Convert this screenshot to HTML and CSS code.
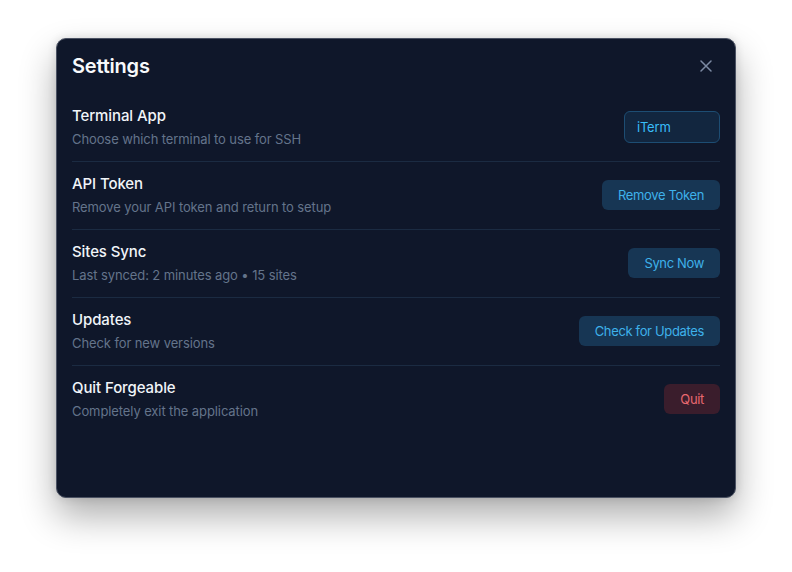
FILE: index.html
```html
<!DOCTYPE html>
<html>
<head>
<meta charset="utf-8">
<link rel="stylesheet" href="styles.css">
</head>
<body>
<div class="dialog">
  <div class="header">
    <h1 class="title">Settings</h1>
    <button class="close" aria-label="Close">
      <svg width="12" height="12" viewBox="0 0 12 12"><path d="M1 1 L11 11 M11 1 L1 11" stroke="#7c8aa3" stroke-width="1.5" stroke-linecap="round"/></svg>
    </button>
  </div>
  <div class="rows">
    <div class="row">
      <div class="info">
        <div class="label">Terminal App</div>
        <div class="desc">Choose which terminal to use for SSH</div>
      </div>
      <div class="select">iTerm</div>
    </div>
    <div class="row">
      <div class="info">
        <div class="label">API Token</div>
        <div class="desc">Remove your API token and return to setup</div>
      </div>
      <button class="btn">Remove Token</button>
    </div>
    <div class="row">
      <div class="info">
        <div class="label">Sites Sync</div>
        <div class="desc">Last synced: 2 minutes ago • 15 sites</div>
      </div>
      <button class="btn">Sync Now</button>
    </div>
    <div class="row">
      <div class="info">
        <div class="label">Updates</div>
        <div class="desc">Check for new versions</div>
      </div>
      <button class="btn">Check for Updates</button>
    </div>
    <div class="row last">
      <div class="info">
        <div class="label">Quit Forgeable</div>
        <div class="desc">Completely exit the application</div>
      </div>
      <button class="btn danger">Quit</button>
    </div>
  </div>
</div>
</body>
</html>
```
FILE: styles.css
```css
html, body {
  margin: 0;
  padding: 0;
  background: #ffffff;
}
body {
  box-sizing: border-box;
  min-height: 572px;
  display: flex;
  justify-content: center;
  align-items: flex-start;
  padding-top: 38px;
  font-family: Inter, "Noto Sans", sans-serif;
}
.dialog {
  box-sizing: border-box;
  width: 680px;
  height: 460px;
  background: #0f172a;
  border: 1px solid #4b5263;
  border-radius: 10px;
  box-shadow: 0 18px 36px rgba(0, 0, 0, 0.32), 0 0 10px rgba(0, 0, 0, 0.12);
  padding: 15px 15px 0 15px;
}
.header {
  display: flex;
  align-items: center;
  justify-content: space-between;
  height: 24px;
  margin-bottom: 16px;
}
.title {
  margin: 0;
  font-size: 20px;
  line-height: 24px;
  font-weight: 600;
  color: #f8fafc;
  letter-spacing: -0.2px;
}
.close {
  background: none;
  border: none;
  padding: 0;
  margin-right: 8px;
  width: 12px;
  height: 12px;
  display: flex;
}
.rows {
  display: flex;
  flex-direction: column;
}
.row {
  display: flex;
  align-items: center;
  justify-content: space-between;
  padding: 12px 0;
  border-bottom: 1px solid #1b2b42;
}
.row.last {
  border-bottom: none;
}
.info {
  display: flex;
  flex-direction: column;
  gap: 3px;
}
.label {
  font-size: 15px;
  line-height: 20px;
  font-weight: 500;
  color: #f1f5f9;
  letter-spacing: -0.1px;
}
.desc {
  font-size: 13px;
  line-height: 20px;
  color: #64748b;
  letter-spacing: -0.1px;
}
.select {
  box-sizing: border-box;
  width: 96px;
  height: 32px;
  padding: 0 12px;
  display: flex;
  align-items: center;
  border: 1px solid #1d4d73;
  background: #12263f;
  border-radius: 6px;
  color: #38bdf8;
  font-size: 13px;
  letter-spacing: -0.2px;
  margin-top: -2px;
}
.btn {
  height: 30px;
  padding: 0 16px;
  border: none;
  border-radius: 6px;
  background: #173654;
  color: #3eb1ea;
  font-family: Inter, "Noto Sans", sans-serif;
  font-size: 13px;
  letter-spacing: -0.35px;
  margin-top: -2px;
}
.btn.danger {
  background: #3a1d2c;
  color: #e8686f;
}
```
